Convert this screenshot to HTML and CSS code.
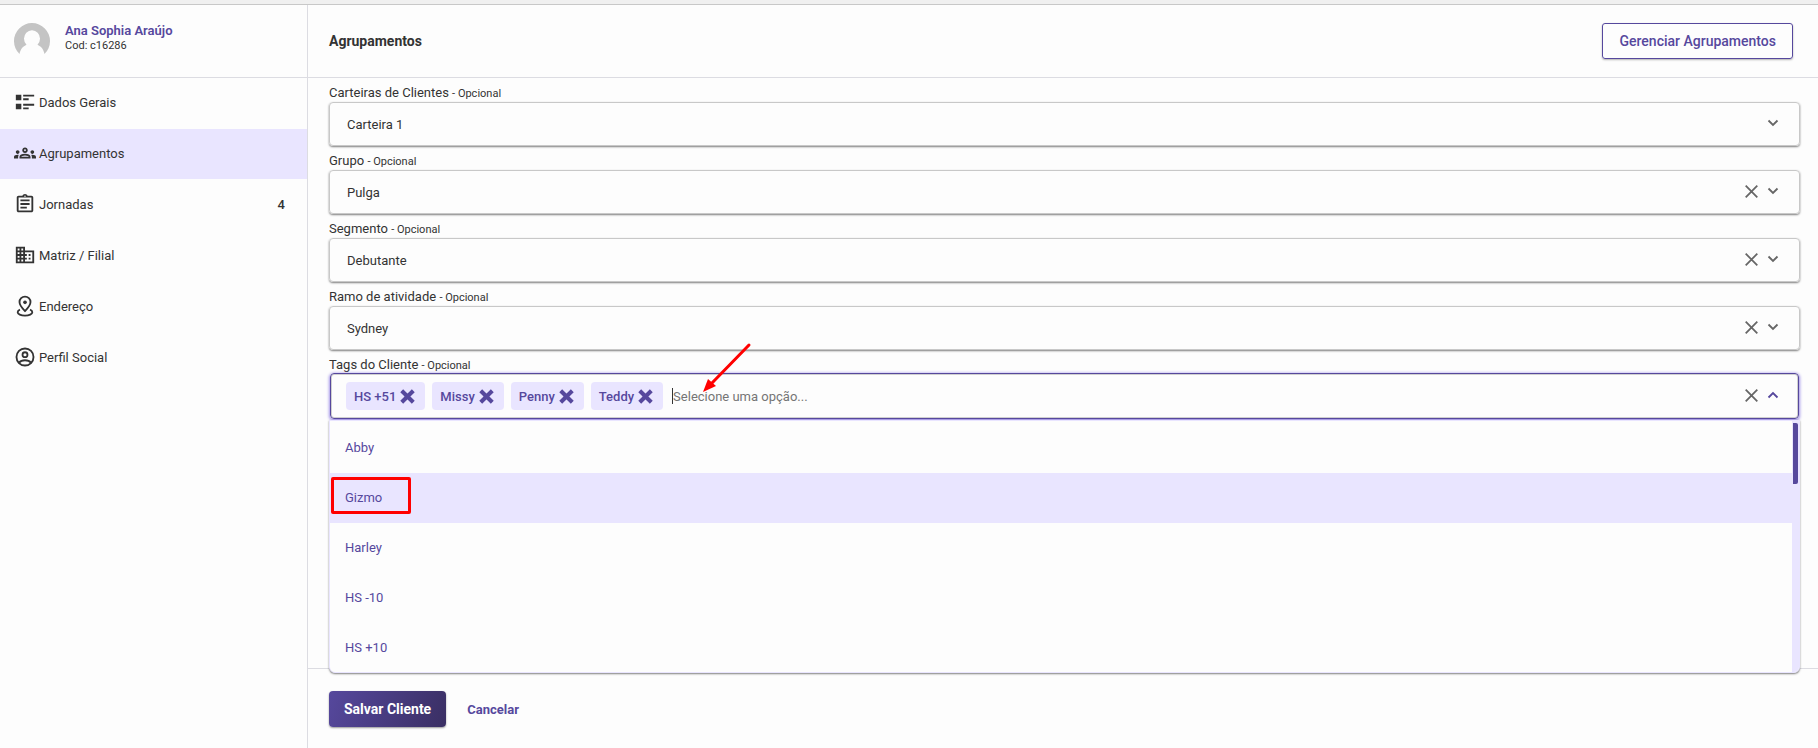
FILE: index.html
```
<!DOCTYPE html>
<html lang="pt-BR">
<head>
    <meta charset="UTF-8">
    <title>Agrupamentos</title>
    <link rel="stylesheet" href="styles.css">
</head>
<body>
    <svg class="sprite" aria-hidden="true">
        <symbol id="chevron" viewBox="0 0 12 12"><path d="M1.500 3.500L6 8l4.500-4.500" fill="none" stroke="currentColor" stroke-width="1.800"/></symbol>
        <symbol id="clear" viewBox="0 0 13 13"><path d="M.7.7l11.600 11.600M12.300.7L.7 12.300" fill="none" stroke="currentColor" stroke-width="1.800"/></symbol>
        <symbol id="remove" viewBox="0 0 14 14"><path d="M1.600 1.600l10.800 10.800M12.400 1.600L1.600 12.400" fill="none" stroke="currentColor" stroke-width="3.800"/></symbol>
    </svg>

    <div class="layout">
        <aside class="sidebar">
            <div class="profile">
                <svg class="avatar" viewBox="0 0 36 36">
                    <path d="M5.500 31A18 18 0 1 1 30.500 31C29.500 26 27 23.500 23.500 21.800A8 8.500 0 1 0 12.500 21.800C9 23.500 6.500 26 5.500 31z" fill="#c4c4c4"/>
                </svg>
                <div>
                    <a href="#" class="profile-name">Ana Sophia Araújo</a>
                    <p class="profile-code">Cod: c16286</p>
                </div>
            </div>
            <nav class="menu">
                <a href="#" class="menu-item">
                    <svg class="icon" viewBox="0 0 24 24"><path d="M2 4h6v6H2zM2 14h6v6H2zM10 4h12v2H10zM10 8h6v2h-6zM10 14h12v2H10zM10 18h6v2h-6z"/></svg>
                    Dados Gerais
                </a>
                <a href="#" class="menu-item active">
                    <svg class="icon" viewBox="0 0 24 24"><path d="M4 13c1.100 0 2-.9 2-2s-.9-2-2-2-2 .9-2 2 .9 2 2 2zm1.130 1.100C4.760 14.040 4.390 14 4 14c-.99 0-1.930.21-2.780.58C.48 14.900 0 15.620 0 16.430V18h4.500v-1.610c0-.83.23-1.610.63-2.290zM20 13c1.100 0 2-.9 2-2s-.9-2-2-2-2 .9-2 2 .9 2 2 2zm4 3.430c0-.81-.48-1.530-1.220-1.850C21.930 14.210 20.990 14 20 14c-.39 0-.76.04-1.130.1.400.68.63 1.460.63 2.290V18H24v-1.570zm-7.760-2.780C15.070 13.130 13.630 12.750 12 12.750s-3.070.39-4.240.9C6.680 14.130 6 15.210 6 16.390V18h12v-1.610c0-1.180-.68-2.260-1.760-2.740zM8.070 16c.09-.23.13-.39.91-.69.97-.38 1.990-.56 3.020-.56s2.050.18 3.020.56c.77.3.81.46.91.69H8.070zM12 8c.55 0 1 .45 1 1s-.45 1-1 1-1-.45-1-1 .45-1 1-1m0-2c-1.660 0-3 1.340-3 3s1.340 3 3 3 3-1.340 3-3-1.340-3-3-3z"/></svg>
                    Agrupamentos
                </a>
                <a href="#" class="menu-item">
                    <svg class="icon" viewBox="0 0 24 24"><path d="M7 15h7v2H7zm0-4h10v2H7zm0-4h10v2H7zm12-4h-4.180C14.400 1.840 13.300 1 12 1s-2.400.84-2.820 2H5c-1.100 0-2 .9-2 2v14c0 1.100.9 2 2 2h14c1.100 0 2-.9 2-2V5c0-1.100-.9-2-2-2zm-7-.25c.41 0 .75.34.75.75s-.34.75-.75.75-.75-.34-.75-.75.34-.75.75-.75zM19 19H5V5h14v14z"/></svg>
                    Jornadas
                    <span class="menu-count">4</span>
                </a>
                <a href="#" class="menu-item">
                    <svg class="icon" viewBox="0 0 24 24"><path d="M12 7V3H2v18h20V7H12zM6 19H4v-2h2v2zm0-4H4v-2h2v2zm0-4H4V9h2v2zm0-4H4V5h2v2zm4 12H8v-2h2v2zm0-4H8v-2h2v2zm0-4H8V9h2v2zm0-4H8V5h2v2zm10 12h-8v-2h2v-2h-2v-2h2v-2h-2V9h8v10zm-2-8h-2v2h2v-2zm0 4h-2v2h2v-2z"/></svg>
                    Matriz / Filial
                </a>
                <a href="#" class="menu-item">
                    <svg class="icon" viewBox="0 0 24 24"><g fill="none" stroke="currentColor" stroke-width="2"><path d="M12 17.500c-4-4-6-6.800-6-9.800a6 6 0 0 1 12 0c0 3-2 5.800-6 9.800z"/><path d="M6.500 16C4.700 16.700 4 17.700 4 18.700 4 20.800 7.500 22.500 12 22.500s8-1.700 8-3.800c0-1-.7-2-2.500-2.700"/></g><circle cx="12" cy="8" r="2"/></svg>
                    Endereço
                </a>
                <a href="#" class="menu-item">
                    <svg class="icon" viewBox="0 0 24 24"><g fill="none" stroke="currentColor" stroke-width="2"><circle cx="12" cy="12" r="9.300"/><circle cx="12" cy="9.500" r="2.700"/><path d="M5.500 18.200C7 16.300 9.500 15.500 12 15.500s5 .8 6.500 2.700"/></g></svg>
                    Perfil Social
                </a>
            </nav>
        </aside>

        <main class="content">
            <header class="content-header">
                <h1>Agrupamentos</h1>
                <button type="button" class="outline-button">Gerenciar Agrupamentos</button>
            </header>

            <form class="form">
                <div class="fields">
                    <label for="carteira">Carteiras de Clientes <small>- Opcional</small></label>
                    <div class="field">
                        <select id="carteira"><option>Carteira 1</option></select>
                        <svg class="chevron"><use href="#chevron"/></svg>
                    </div>

                    <label for="grupo">Grupo <small>- Opcional</small></label>
                    <div class="field">
                        <select id="grupo"><option>Pulga</option></select>
                        <button type="button" class="clear" aria-label="Limpar"><svg><use href="#clear"/></svg></button>
                        <svg class="chevron"><use href="#chevron"/></svg>
                    </div>

                    <label for="segmento">Segmento <small>- Opcional</small></label>
                    <div class="field">
                        <select id="segmento"><option>Debutante</option></select>
                        <button type="button" class="clear" aria-label="Limpar"><svg><use href="#clear"/></svg></button>
                        <svg class="chevron"><use href="#chevron"/></svg>
                    </div>

                    <label for="ramo">Ramo de atividade <small>- Opcional</small></label>
                    <div class="field">
                        <select id="ramo"><option>Sydney</option></select>
                        <button type="button" class="clear" aria-label="Limpar"><svg><use href="#clear"/></svg></button>
                        <svg class="chevron"><use href="#chevron"/></svg>
                    </div>

                    <label for="tags">Tags do Cliente <small>- Opcional</small></label>
                    <div class="tags">
                        <div class="field open">
                            <span class="tag">HS +51 <button type="button" aria-label="Remover HS +51"><svg><use href="#remove"/></svg></button></span>
                            <span class="tag">Missy <button type="button" aria-label="Remover Missy"><svg><use href="#remove"/></svg></button></span>
                            <span class="tag">Penny <button type="button" aria-label="Remover Penny"><svg><use href="#remove"/></svg></button></span>
                            <span class="tag">Teddy <button type="button" aria-label="Remover Teddy"><svg><use href="#remove"/></svg></button></span>
                            <input type="text" id="tags" placeholder="Selecione uma opção...">
                            <button type="button" class="clear" aria-label="Limpar"><svg><use href="#clear"/></svg></button>
                            <svg class="chevron up"><use href="#chevron"/></svg>
                        </div>
                        <div class="dropdown">
                            <ul class="options" role="listbox" aria-label="Tags do Cliente">
                                <li role="option">Abby</li>
                                <li role="option" class="highlighted">Gizmo</li>
                                <li role="option">Harley</li>
                                <li role="option">HS -10</li>
                                <li role="option">HS +10</li>
                            </ul>
                            <div class="scroll-track"><div class="scroll-thumb"></div></div>
                        </div>
                        <div class="mark-box"></div>
                        <svg class="mark-arrow" viewBox="0 0 50 52"><path d="M47 3L10 41" stroke="#f00" stroke-width="3" stroke-linecap="round"/><path d="M1 50l5-13 8 7z" fill="#f00"/></svg>
                    </div>
                </div>

                <footer class="actions">
                    <button type="submit" class="save-button">Salvar Cliente</button>
                    <button type="button" class="cancel-button">Cancelar</button>
                </footer>
            </form>
        </main>
    </div>
</body>
</html>
```
FILE: styles.css
```
* {
    box-sizing: border-box;
}

body {
    margin: 0;
    font-family: Roboto, "Liberation Sans", sans-serif;
    font-size: 13px;
    color: #333;
    background-color: #fdfdfd;
    border-top: 4px solid #f0f0f0;
    min-height: 100vh;
    display: flex;
}

button {
    font-family: inherit;
    border: none;
    background: none;
    padding: 0;
    cursor: pointer;
}

a {
    color: inherit;
    text-decoration: none;
}

.sprite {
    display: none;
}

.layout {
    flex: 1;
    display: flex;
    border-top: 1px solid #c8c8c8;
}

/* Sidebar */
.sidebar {
    width: 308px;
    border-right: 1px solid #dcdce2;
}

.profile {
    display: flex;
    gap: 15px;
    height: 73px;
    padding: 18px 14px;
    border-bottom: 1px solid #dcdce2;
}

.avatar {
    width: 36px;
    height: 36px;
}

.profile-name {
    display: block;
    line-height: 16px;
    font-weight: 600;
    color: #56489d;
}

.profile-code {
    margin: 0;
    font-size: 11px;
    line-height: 14px;
}

.menu {
    display: flex;
    flex-direction: column;
    gap: 1px;
}

.menu-item {
    display: flex;
    align-items: center;
    gap: 3px;
    height: 50px;
    padding: 0 22px 2px 14px;
}

.menu-item.active {
    background-color: #e9e5ff;
}

.icon {
    width: 22px;
    height: 22px;
    fill: currentColor;
}

.menu-count {
    margin-left: auto;
    font-weight: 500;
}

/* Content */
.content {
    flex: 1;
    display: flex;
    flex-direction: column;
}

.content-header {
    display: flex;
    align-items: center;
    justify-content: space-between;
    height: 73px;
    padding: 0 25px 0 21px;
    border-bottom: 1px solid #dcdce2;
}

.content-header h1 {
    margin: 0;
    font-size: 14px;
    font-weight: 700;
}

.outline-button {
    height: 36px;
    padding: 0 16px;
    border: 1px solid #56489d;
    border-radius: 3px;
    box-shadow: 0 1px 2px rgba(0, 0, 0, 0.3);
    font-size: 14px;
    font-weight: 500;
    color: #56489d;
}

.form {
    flex: 1;
    display: flex;
    flex-direction: column;
}

.fields {
    flex: 1;
    padding: 0 18px 0 21px;
}

.fields label {
    display: block;
    height: 24px;
    padding-top: 5px;
    line-height: 19px;
}

.fields small {
    font-size: 11px;
}

.field {
    display: flex;
    align-items: center;
    height: 44px;
    padding: 0 20px 0 17px;
    border: 1px solid #c8c8c8;
    border-radius: 4px;
    box-shadow: 0 1px 2px rgba(0, 0, 0, 0.5);
}

.field select,
.field input {
    flex: 1;
    min-width: 0;
    padding: 0;
    border: none;
    outline: none;
    appearance: none;
    background: none;
    font: inherit;
    color: inherit;
}

.field select {
    height: 42px;
}

.clear {
    display: flex;
    margin-right: 9px;
    padding-bottom: 2px;
    color: #666;
}

.clear svg {
    width: 13px;
    height: 13px;
}

.chevron {
    width: 12px;
    height: 12px;
    margin-bottom: 2px;
    color: #666;
}

.chevron.up {
    transform: rotate(180deg);
    color: #56489d;
}

.tags {
    position: relative;
}

.field.open {
    height: 46px;
    margin: -1px 1px;
    padding: 0 19px 0 15px;
    border-color: #56489d;
    box-shadow: inset 0 0 0 1px #d0d0d0, 0 1px 3px 1px #a394e8;
}

.tag {
    display: flex;
    align-items: center;
    gap: 4px;
    height: 28px;
    margin-right: 7px;
    padding: 0 10px 0 8px;
    border-radius: 4px;
    background-color: #e9e5ff;
    font-weight: 500;
    color: #56489d;
}

.tag button {
    display: flex;
    color: inherit;
}

.tag svg {
    width: 15px;
    height: 15px;
}

.field.open input {
    height: 16px;
    margin-left: 2px;
    border-left: 1px solid #333;
}

.field.open input::placeholder {
    color: #757575;
}

/* Open list */
.dropdown {
    position: absolute;
    top: 47px;
    left: 0;
    right: 0;
    display: flex;
    border: 1px solid #e9e5ff;
    border-radius: 0 0 6px 6px;
    background-color: #fdfdfd;
    box-shadow: 0 1px 2px rgba(0, 0, 0, 0.5);
    max-height: 253px;
    overflow: hidden;
}

.options {
    flex: 1;
    margin: 0;
    padding: 2px 0 0;
    list-style: none;
}

.options li {
    height: 50px;
    padding-left: 15px;
    line-height: 50px;
    color: #56489d;
}

.options .highlighted {
    background-color: #e9e5ff;
}

.scroll-track {
    width: 7px;
    padding: 2px 1px 0;
    background-color: #e9e5ff;
}

.scroll-thumb {
    height: 61px;
    border-radius: 0 2px 2px 0;
    background-color: #56489d;
}

/* Highlights drawn over the page */
.mark-box {
    position: absolute;
    top: 104px;
    left: 2px;
    width: 80px;
    height: 37px;
    border: 3px solid #f00;
    border-radius: 2px;
}

.mark-arrow {
    position: absolute;
    top: -31px;
    left: 373px;
    width: 50px;
    height: 52px;
}

/* Footer */
.actions {
    display: flex;
    gap: 21px;
    height: 80px;
    padding: 22px 21px;
    border-top: 1px solid #dcdce2;
}

.save-button {
    height: 36px;
    padding: 0 15px;
    border-radius: 4px;
    background: linear-gradient(110deg, #56489d, #3a2f63);
    box-shadow: 0 1px 2px rgba(0, 0, 0, 0.4);
    font-size: 14px;
    font-weight: 700;
    color: #fff;
}

.cancel-button {
    height: 36px;
    font-size: 13px;
    font-weight: 700;
    color: #56489d;
}
```
